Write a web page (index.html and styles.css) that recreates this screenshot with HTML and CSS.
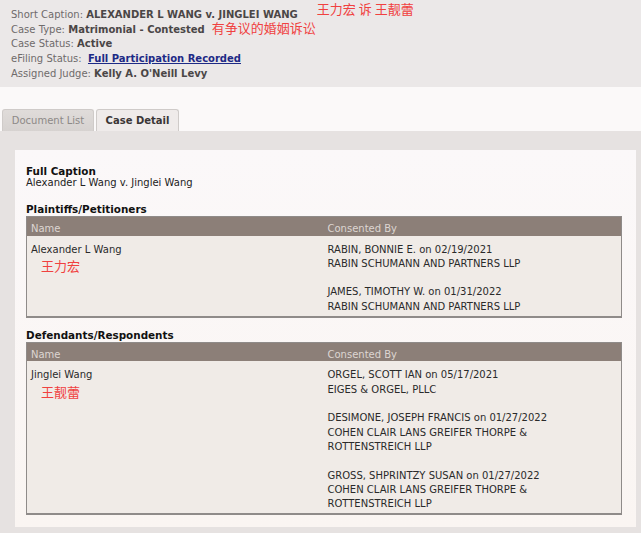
FILE: index.html
```html
<!DOCTYPE html>
<html>
<head>
<meta name="viewport" content="width=device-width, initial-scale=1">
<link rel="stylesheet" href="styles.css">
</head>
<body>

<div class="summary">
    <div class="line"><span class="label">Short Caption:</span> <b>ALEXANDER L WANG v. JINGLEI WANG</b><span class="note note-top">王力宏 诉 王靓蕾</span></div>
    <div class="line"><span class="label">Case Type:</span> <b>Matrimonial - Contested</b><span class="note">有争议的婚姻诉讼</span></div>
    <div class="line"><span class="label">Case Status:</span> <b>Active</b></div>
    <div class="line"><span class="label">eFiling Status:</span>&nbsp; <a href="#" class="status-link">Full Participation Recorded</a></div>
    <div class="line"><span class="label">Assigned Judge:</span> <b>Kelly A. O'Neill Levy</b></div>
</div>

<div class="tabs">
    <a href="#" class="tab">Document List</a>
    <a href="#" class="tab active">Case Detail</a>
</div>

<div class="panel">
    <div class="detail">
        <h4>Full Caption</h4>
        <div class="caption">Alexander L Wang v. Jinglei Wang</div>

        <h4 class="section">Plaintiffs/Petitioners</h4>
        <table class="parties">
            <tr><th class="col-name">Name</th><th>Consented By</th></tr>
            <tr>
                <td>Alexander L Wang<div class="cn">王力宏</div></td>
                <td>
                    <p>RABIN, BONNIE E. on 02/19/2021<br>RABIN SCHUMANN AND PARTNERS LLP</p>
                    <p>JAMES, TIMOTHY W. on 01/31/2022<br>RABIN SCHUMANN AND PARTNERS LLP</p>
                </td>
            </tr>
        </table>

        <h4 class="section">Defendants/Respondents</h4>
        <table class="parties">
            <tr><th class="col-name">Name</th><th>Consented By</th></tr>
            <tr>
                <td>Jinglei Wang<div class="cn">王靓蕾</div></td>
                <td>
                    <p>ORGEL, SCOTT IAN on 05/17/2021<br>EIGES &amp; ORGEL, PLLC</p>
                    <p>DESIMONE, JOSEPH FRANCIS on 01/27/2022<br>COHEN CLAIR LANS GREIFER THORPE &amp;<br>ROTTENSTREICH LLP</p>
                    <p>GROSS, SHPRINTZY SUSAN on 01/27/2022<br>COHEN CLAIR LANS GREIFER THORPE &amp;<br>ROTTENSTREICH LLP</p>
                </td>
            </tr>
        </table>
    </div>
</div>

</body>
</html>
```

FILE: styles.css
```css
* {
    box-sizing: border-box;
}

body {
    margin: 0;
    background: #fbf9f9;
    color: #333;
    font-family: "DejaVu Sans", Verdana, sans-serif;
    font-size: 10px;
}

/* Case summary at the top */
.summary {
    background-color: #ebe8e8;
    padding: 6px 11px 6px 11px;
    line-height: 15px;
}

.summary .line {
    height: 15px;
    white-space: nowrap;
}

.summary .label {
    color: #6f6b6b;
}

.summary b {
    color: #4a4646;
}

.status-link {
    color: #1d2a86;
    font-weight: bold;
}

/* Red annotations */
.note {
    color: #f0413f;
    font-family: "Noto Sans CJK SC", sans-serif;
    font-size: 13px;
    line-height: 13px;
    margin-left: 7px;
}

.note-top {
    position: relative;
    top: -4px;
    margin-left: 19px;
}

/* Tabs */
.tabs {
    display: flex;
    gap: 2px;
    padding: 22px 0 0 2px;
}

.tab {
    height: 22px;
    padding: 5px 0 0 0;
    border: 1px solid #cfcbc9;
    border-bottom: none;
    border-radius: 3px 3px 0 0;
    text-align: center;
    text-decoration: none;
    white-space: nowrap;
}

.tab:first-child {
    width: 92px;
    background: linear-gradient(#e0dcda, #d6d2d0);
    color: #8d8987;
}

.tab.active {
    width: 83px;
    background: #efebea;
    color: #3a3636;
    font-weight: bold;
}

/* Detail panel */
.panel {
    background: #e6e2e1;
    padding: 19px 5px 6px 15px;
}

.detail {
    background: linear-gradient(#fbf8f9, #faf5f2);
    padding: 15px 14px 12px 11px;
    line-height: 12px;
}

.detail h4 {
    margin: 0;
    font-size: 10.4px;
    color: #111;
    line-height: 12px;
}

.caption {
    color: #222;
}

.detail h4.section {
    margin-top: 14px;
    margin-bottom: 1px;
}

.parties + h4.section {
    margin-top: 11px;
}

/* Party tables */
.parties {
    width: 100%;
    border-collapse: collapse;
    border: 1px solid #8f8b89;
    border-bottom-width: 2px;
}

.parties th {
    background: #8c7f78;
    color: #ddd6d2;
    font-weight: normal;
    text-align: left;
    height: 19px;
    padding: 4px 4px 0 4px;
    line-height: 13px;
}

.parties th.col-name {
    width: 297px;
}

.parties td {
    background: #f0ebe7;
    vertical-align: top;
    padding: 7px 4px 2px 4px;
    line-height: 14.3px;
    color: #2a2a2a;
}

.parties p {
    margin: 0 0 14.3px 0;
}

.parties p:last-child {
    margin-bottom: 0;
}

.cn {
    color: #f0413f;
    font-family: "Noto Sans CJK SC", sans-serif;
    font-size: 13px;
    line-height: 18px;
    padding-left: 10px;
}
```
